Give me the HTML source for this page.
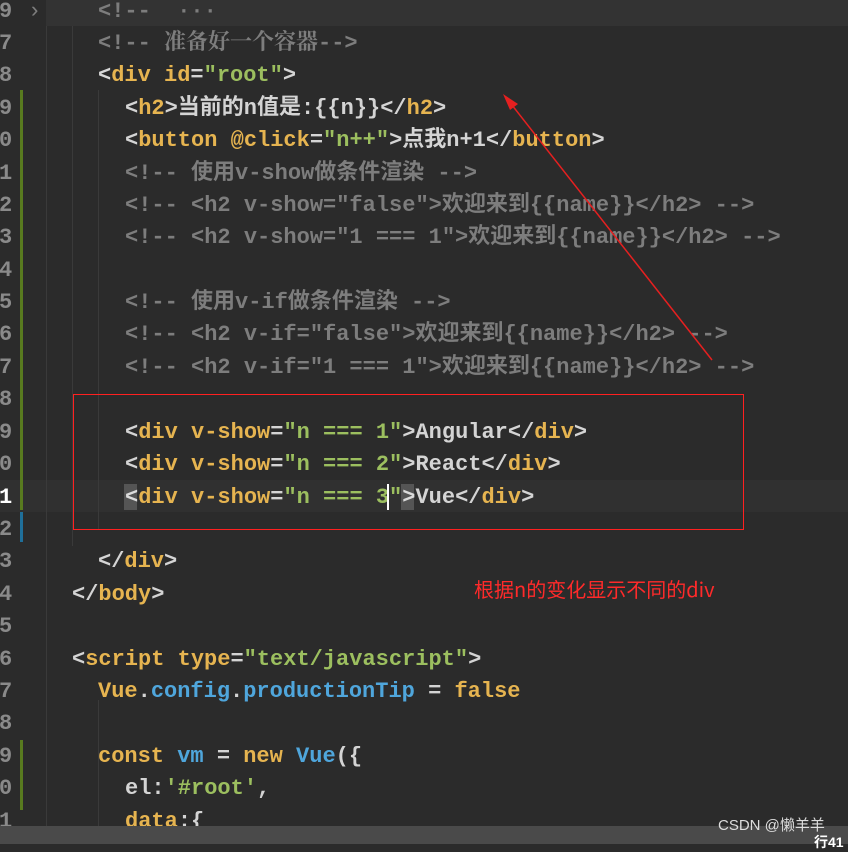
<!DOCTYPE html>
<html><head><meta charset="utf-8"><style>
html,body{margin:0;width:848px;height:844px}
body{background:#2b2b2b;overflow:hidden;position:relative;font-family:"Liberation Mono","Noto Sans CJK SC",monospace;font-size:22px;font-weight:bold;color:#d4d4d4}
.l{position:absolute;left:0;height:32px;line-height:32px;white-space:pre;margin-top:2px}
.n{position:absolute;left:-1px;color:#8a8a8a;font-weight:bold}
.c{position:absolute;white-space:pre}
.t{color:#e6b450}.s{color:#9cbf5f}.g{color:#7d7d7d}.b{color:#4fa6dc}.w{color:#d8d8d8}
.cm{font-family:"Liberation Mono","Noto Serif CJK SC",monospace}
</style></head><body>
<div style="position:absolute;left:46px;top:0;width:802px;height:26px;background:#333"></div>
<div style="position:absolute;left:0;top:480px;width:848px;height:32px;background:#303030"></div>
<div style="position:absolute;left:46px;top:26px;width:1px;height:800px;background:#3a3a3a"></div>
<div style="position:absolute;left:72px;top:26px;width:1px;height:520px;background:#3a3a3a"></div>
<div style="position:absolute;left:98px;top:90px;width:1px;height:440px;background:#3a3a3a"></div>
<div style="position:absolute;left:98px;top:700px;width:1px;height:130px;background:#3a3a3a"></div>
<div style="position:absolute;left:20px;top:90px;width:3px;height:420px;background:#587a1f"></div>
<div style="position:absolute;left:20px;top:512px;width:3px;height:30px;background:#1f6f9a"></div>
<div style="position:absolute;left:20px;top:740px;width:3px;height:70px;background:#587a1f"></div>

<div class="l" style="top:-6px"><span class="n">9</span><span class="c g" style="left:28px;font-weight:normal">›</span><span class="c g" style="left:98px">&lt;!--  ···</span></div>
<div class="l" style="top:26px"><span class="n">7</span><span class="c g cm" style="left:98px">&lt;!-- 准备好一个容器--&gt;</span></div>
<div class="l" style="top:58px"><span class="n">8</span><span class="c" style="left:98px"><span class="w">&lt;</span><span class="t">div id</span>=<span class="s">"root"</span>&gt;</span></div>
<div class="l" style="top:91px"><span class="n">9</span><span class="c" style="left:125px">&lt;<span class="t">h2</span>&gt;当前的n值是:{{n}}&lt;/<span class="t">h2</span>&gt;</span></div>
<div class="l" style="top:123px"><span class="n">0</span><span class="c" style="left:125px">&lt;<span class="t">button @click</span>=<span class="s">"n++"</span>&gt;点我n+1&lt;/<span class="t">button</span>&gt;</span></div>
<div class="l" style="top:156px"><span class="n">1</span><span class="c g" style="left:125px">&lt;!-- 使用v-show做条件渲染 --&gt;</span></div>
<div class="l" style="top:188px"><span class="n">2</span><span class="c g" style="left:125px">&lt;!-- &lt;h2 v-show="false"&gt;欢迎来到{{name}}&lt;/h2&gt; --&gt;</span></div>
<div class="l" style="top:220px"><span class="n">3</span><span class="c g" style="left:125px">&lt;!-- &lt;h2 v-show="1 === 1"&gt;欢迎来到{{name}}&lt;/h2&gt; --&gt;</span></div>
<div class="l" style="top:253px"><span class="n">4</span></div>
<div class="l" style="top:285px"><span class="n">5</span><span class="c g" style="left:125px">&lt;!-- 使用v-if做条件渲染 --&gt;</span></div>
<div class="l" style="top:317px"><span class="n">6</span><span class="c g" style="left:125px">&lt;!-- &lt;h2 v-if="false"&gt;欢迎来到{{name}}&lt;/h2&gt; --&gt;</span></div>
<div class="l" style="top:350px"><span class="n">7</span><span class="c g" style="left:125px">&lt;!-- &lt;h2 v-if="1 === 1"&gt;欢迎来到{{name}}&lt;/h2&gt; --&gt;</span></div>
<div class="l" style="top:382px"><span class="n">8</span></div>
<div class="l" style="top:415px"><span class="n">9</span><span class="c" style="left:125px">&lt;<span class="t">div v-show</span>=<span class="s">"n === 1"</span>&gt;Angular&lt;/<span class="t">div</span>&gt;</span></div>
<div class="l" style="top:447px"><span class="n">0</span><span class="c" style="left:125px">&lt;<span class="t">div v-show</span>=<span class="s">"n === 2"</span>&gt;React&lt;/<span class="t">div</span>&gt;</span></div>
<div class="l" style="top:480px"><span class="n" style="color:#fff">1</span><span class="c" style="left:125px">&lt;<span class="t">div v-show</span>=<span class="s">"n === 3"</span>&gt;Vue&lt;/<span class="t">div</span>&gt;</span></div>
<div style="position:absolute;left:124px;top:484px;width:13px;height:26px;background:rgba(255,255,255,.18)"></div>
<div style="position:absolute;left:401px;top:484px;width:13px;height:26px;background:rgba(255,255,255,.18)"></div>
<div style="position:absolute;left:387px;top:484px;width:2px;height:26px;background:#fff"></div>
<div class="l" style="top:512px"><span class="n">2</span></div>
<div class="l" style="top:544px"><span class="n">3</span><span class="c" style="left:98px">&lt;/<span class="t">div</span>&gt;</span></div>
<div class="l" style="top:577px"><span class="n">4</span><span class="c" style="left:72px">&lt;/<span class="t">body</span>&gt;</span></div>
<div class="l" style="top:609px"><span class="n">5</span></div>
<div class="l" style="top:642px"><span class="n">6</span><span class="c" style="left:72px">&lt;<span class="t">script type</span>=<span class="s">"text/javascript"</span>&gt;</span></div>
<div class="l" style="top:674px"><span class="n">7</span><span class="c" style="left:98px"><span class="t">Vue</span>.<span class="b">config</span>.<span class="b">productionTip</span> = <span class="t">false</span></span></div>
<div class="l" style="top:706px"><span class="n">8</span></div>
<div class="l" style="top:739px"><span class="n">9</span><span class="c" style="left:98px"><span class="t">const</span> <span class="b">vm</span> = <span class="t">new</span> <span class="b">Vue</span>({</span></div>
<div class="l" style="top:771px"><span class="n">0</span><span class="c" style="left:125px">el:<span class="s">'#root'</span>,</span></div>
<div class="l" style="top:804px"><span class="n">1</span><span class="c" style="left:125px"><span class="t">data</span>:{</span></div>

<div style="position:absolute;left:73px;top:394px;width:669px;height:134px;border:1px solid #ff2020"></div>
<svg style="position:absolute;left:0;top:0" width="848" height="844"><line x1="712" y1="360" x2="508" y2="100" stroke="#e52020" stroke-width="1.5"/><polygon points="503,94 518,104 510,110" fill="#e52020"/></svg>
<div style="position:absolute;left:474px;top:574px;font-family:'Noto Sans CJK SC',sans-serif;font-weight:normal;font-size:20px;color:#ff2a2a">根据n的变化显示不同的div</div>

<div style="position:absolute;left:0;top:826px;width:848px;height:18px;background:#4a4a4a"></div>
<div style="position:absolute;left:718px;top:814px;font-family:'Liberation Sans','Noto Sans CJK SC',sans-serif;font-weight:normal;font-size:15px;color:#ddd">CSDN @懒羊羊</div>
<div style="position:absolute;left:814px;top:832px;font-family:'Liberation Sans','Noto Sans CJK SC',sans-serif;font-size:14px;color:#fff">行41</div>
</body></html>
